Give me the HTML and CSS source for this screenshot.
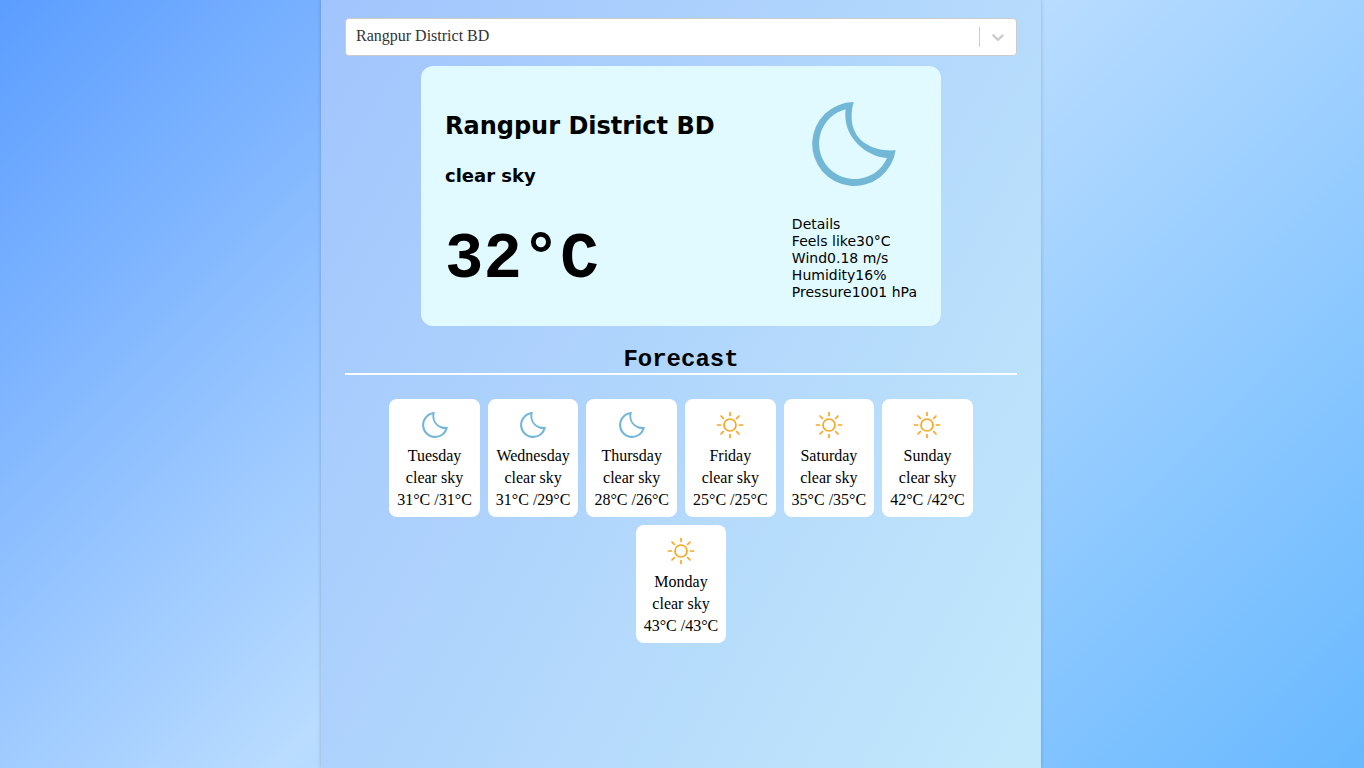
FILE: index.html
```html
<!DOCTYPE html>
<html lang="en">
<head>
<meta charset="utf-8">
<meta name="viewport" content="width=device-width, initial-scale=1">
<title>Weather</title>
<link rel="stylesheet" href="styles.css">
</head>
<body>
<svg class="sprite" aria-hidden="true">
  <symbol id="moon" viewBox="0 0 84 84">
    <path fill-rule="evenodd" d="M41.700 0A42 42 0 1 0 83.700 48.300C58 50 32 36 41.700 0ZM33.700 7.200C30 33 52 54 75 56A35.500 35.500 0 1 1 33.700 7.200Z"/>
  </symbol>
  <symbol id="sun" viewBox="0 0 28 28">
    <g fill="none" stroke="currentColor" stroke-width="1.700" stroke-linecap="round">
      <circle cx="14" cy="14" r="6"/>
      <path d="M14 1.500v3M14 23.500v3M1.500 14h3M23.500 14h3M5 5l2.300 2.300M20.700 20.700l2.300 2.300M23 5l-2.300 2.300M7.300 20.700l-2.300 2.300"/>
    </g>
  </symbol>
</svg>
<main class="app">
  <div class="search">
    <select class="search-select" aria-label="City">
      <option>Rangpur District BD</option>
    </select>
    <span class="search-indicator">
      <svg class="chevron" viewBox="0 0 20 20" aria-hidden="true"><path d="M4.516 7.548c0.436-0.446 1.043-0.481 1.576 0l3.908 3.747 3.908-3.747c0.533-0.481 1.141-0.446 1.574 0 0.436 0.445 0.408 1.197 0 1.615-0.406 0.418-4.695 4.502-4.695 4.502-0.217 0.223-0.502 0.335-0.787 0.335s-0.570-0.112-0.789-0.335c0 0-4.287-4.084-4.695-4.502s-0.436-1.170 0-1.615z"/></svg>
    </span>
  </div>
  <section class="current">
    <div class="summary">
      <h1 class="city">Rangpur District BD</h1>
      <h2 class="description">clear sky</h2>
      <p class="temperature">32°C</p>
    </div>
    <div class="conditions">
      <svg class="current-icon" aria-hidden="true"><use href="#moon"/></svg>
      <div class="details">
        <div>Details</div>
        <div><span>Feels like</span><span>30°C</span></div>
        <div><span>Wind</span><span>0.18 m/s</span></div>
        <div><span>Humidity</span><span>16%</span></div>
        <div><span>Pressure</span><span>1001 hPa</span></div>
      </div>
    </div>
  </section>
  <h2 class="forecast-title">Forecast</h2>
  <section class="forecast">
    <article class="day"><svg class="day-icon night" aria-hidden="true"><use href="#moon"/></svg><div>Tuesday</div><div>clear sky</div><div>31°C /31°C</div></article>
    <article class="day"><svg class="day-icon night" aria-hidden="true"><use href="#moon"/></svg><div>Wednesday</div><div>clear sky</div><div>31°C /29°C</div></article>
    <article class="day"><svg class="day-icon night" aria-hidden="true"><use href="#moon"/></svg><div>Thursday</div><div>clear sky</div><div>28°C /26°C</div></article>
    <article class="day"><svg class="day-icon sunny" aria-hidden="true"><use href="#sun"/></svg><div>Friday</div><div>clear sky</div><div>25°C /25°C</div></article>
    <article class="day"><svg class="day-icon sunny" aria-hidden="true"><use href="#sun"/></svg><div>Saturday</div><div>clear sky</div><div>35°C /35°C</div></article>
    <article class="day"><svg class="day-icon sunny" aria-hidden="true"><use href="#sun"/></svg><div>Sunday</div><div>clear sky</div><div>42°C /42°C</div></article>
    <article class="day"><svg class="day-icon sunny" aria-hidden="true"><use href="#sun"/></svg><div>Monday</div><div>clear sky</div><div>43°C /43°C</div></article>
  </section>
</main>
</body>
</html>
```

FILE: styles.css
```css
* {
  box-sizing: border-box;
}

body {
  margin: 0;
  padding-right: 2px;
  min-height: 100vh;
  font-family: "Times New Roman", "Liberation Serif", serif;
  font-size: 16px;
  background: linear-gradient(135deg, #5b9dff, #b9dcff 49%, #68b8ff);
}

.sprite {
  position: absolute;
  width: 0;
  height: 0;
}

.app {
  max-width: 720px;
  min-height: 100vh;
  margin: 0 auto;
  padding: 18px 24px;
  background: linear-gradient(120deg, #a1c4fd, #c2e9fb);
  box-shadow: 0 0 4px rgba(0, 0, 0, 0.2);
}

.search {
  display: grid;
  align-items: center;
}

.search-select {
  grid-area: 1 / 1;
  appearance: none;
  width: 100%;
  height: 38px;
  padding: 0 46px 2px 10px;
  border: 1px solid #ccc;
  border-radius: 4px;
  background: #fff;
  color: #333;
  font: inherit;
  line-height: 34px;
}

.search-indicator {
  grid-area: 1 / 1;
  justify-self: end;
  display: flex;
  align-items: center;
  height: 20px;
  padding: 0 8px;
  margin-right: 1px;
  border-left: 1px solid #ccc;
  pointer-events: none;
}

.chevron {
  width: 20px;
  height: 20px;
  fill: #ccc;
}

.current {
  display: flex;
  justify-content: space-between;
  max-width: 520px;
  min-height: 260px;
  margin: 10px auto 0;
  padding: 24px;
  border-radius: 12px;
  background: #e0faff;
  font-family: Verdana, "DejaVu Sans", sans-serif;
}

.city {
  margin: 20px 0;
  font-size: 24px;
  line-height: 32px;
}

.description {
  margin: 0 0 34px;
  font-size: 18px;
  line-height: 28px;
}

.temperature {
  margin: 0;
  font-family: "Courier New", "Liberation Mono", monospace;
  font-size: 64px;
  font-weight: bold;
  line-height: 72px;
}

.conditions {
  display: flex;
  flex-direction: column;
  align-items: center;
  gap: 30px;
  padding-top: 12px;
}

.current-icon {
  width: 84px;
  height: 84px;
  fill: #72b7d6;
}

.details {
  font-size: 14px;
  line-height: 17px;
}

.forecast-title {
  margin: 20px 0 24px;
  border-bottom: 2px solid #fff;
  font-family: "Courier New", "Liberation Mono", monospace;
  font-size: 24px;
  line-height: 27px;
  text-align: center;
}

.forecast {
  display: flex;
  flex-wrap: wrap;
  justify-content: center;
  gap: 8px;
  padding: 0 40px;
}

.day {
  display: flex;
  flex-direction: column;
  align-items: center;
  padding: 8px 8px 6px;
  border-radius: 8px;
  background: #fff;
  line-height: 22px;
}

.day-icon {
  width: 28px;
  height: 36px;
  margin-bottom: 2px;
}

.night {
  padding: 0 1px;
  fill: #72b7d6;
}

.sunny {
  color: #faa61f;
}
```
